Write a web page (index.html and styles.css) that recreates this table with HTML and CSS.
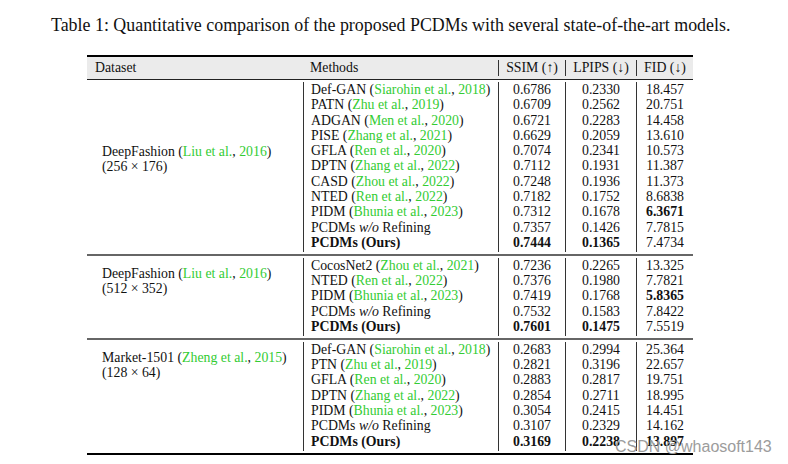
FILE: index.html
```html
<!DOCTYPE html>
<html>
<head>
<meta charset="utf-8">
<link rel="stylesheet" href="styles.css">
</head>
<body>
<div class="page">
  <p class="caption">Table 1: Quantitative comparison of the proposed PCDMs with several state-of-the-art models.</p>
  <div class="tbl">
    <div class="toprule"></div>
    <div class="head">
      <div class="hds">Dataset</div>
      <div class="hm">Methods</div>
      <div class="hc">SSIM (↑)</div>
      <div class="hc">LPIPS (↓)</div>
      <div class="hc">FID (↓)</div>
    </div>
    <div class="headrule"></div>

    <div class="group">
      <div class="ds ds-low"><div>DeepFashion (<span class="cite">Liu et al.</span>, <span class="cite">2016</span>)<br>(256 × 176)</div></div>
      <div class="m">
        <div>Def-GAN (<span class="cite">Siarohin et al.</span>, <span class="cite">2018</span>)</div>
        <div>PATN (<span class="cite">Zhu et al.</span>, <span class="cite">2019</span>)</div>
        <div>ADGAN (<span class="cite">Men et al.</span>, <span class="cite">2020</span>)</div>
        <div>PISE (<span class="cite">Zhang et al.</span>, <span class="cite">2021</span>)</div>
        <div>GFLA (<span class="cite">Ren et al.</span>, <span class="cite">2020</span>)</div>
        <div>DPTN (<span class="cite">Zhang et al.</span>, <span class="cite">2022</span>)</div>
        <div>CASD (<span class="cite">Zhou et al.</span>, <span class="cite">2022</span>)</div>
        <div>NTED (<span class="cite">Ren et al.</span>, <span class="cite">2022</span>)</div>
        <div>PIDM (<span class="cite">Bhunia et al.</span>, <span class="cite">2023</span>)</div>
        <div>PCDMs <i>w/o</i> Refining</div>
        <div><b>PCDMs (Ours)</b></div>
      </div>
      <div class="c">
        <div>0.6786</div><div>0.6709</div><div>0.6721</div><div>0.6629</div><div>0.7074</div><div>0.7112</div><div>0.7248</div><div>0.7182</div><div>0.7312</div><div>0.7357</div><div><b>0.7444</b></div>
      </div>
      <div class="c">
        <div>0.2330</div><div>0.2562</div><div>0.2283</div><div>0.2059</div><div>0.2341</div><div>0.1931</div><div>0.1936</div><div>0.1752</div><div>0.1678</div><div>0.1426</div><div><b>0.1365</b></div>
      </div>
      <div class="c">
        <div>18.457</div><div>20.751</div><div>14.458</div><div>13.610</div><div>10.573</div><div>11.387</div><div>11.373</div><div>8.6838</div><div><b>6.3671</b></div><div>7.7815</div><div>7.4734</div>
      </div>
    </div>
    <div class="midrule"></div>

    <div class="group">
      <div class="ds ds-high"><div>DeepFashion (<span class="cite">Liu et al.</span>, <span class="cite">2016</span>)<br>(512 × 352)</div></div>
      <div class="m">
        <div>CocosNet2 (<span class="cite">Zhou et al.</span>, <span class="cite">2021</span>)</div>
        <div>NTED (<span class="cite">Ren et al.</span>, <span class="cite">2022</span>)</div>
        <div>PIDM (<span class="cite">Bhunia et al.</span>, <span class="cite">2023</span>)</div>
        <div>PCDMs <i>w/o</i> Refining</div>
        <div><b>PCDMs (Ours)</b></div>
      </div>
      <div class="c">
        <div>0.7236</div><div>0.7376</div><div>0.7419</div><div>0.7532</div><div><b>0.7601</b></div>
      </div>
      <div class="c">
        <div>0.2265</div><div>0.1980</div><div>0.1768</div><div>0.1583</div><div><b>0.1475</b></div>
      </div>
      <div class="c">
        <div>13.325</div><div>7.7821</div><div><b>5.8365</b></div><div>7.8422</div><div>7.5519</div>
      </div>
    </div>
    <div class="midrule"></div>

    <div class="group">
      <div class="ds ds-high"><div>Market-1501 (<span class="cite">Zheng et al.</span>, <span class="cite">2015</span>)<br>(128 × 64)</div></div>
      <div class="m">
        <div>Def-GAN (<span class="cite">Siarohin et al.</span>, <span class="cite">2018</span>)</div>
        <div>PTN (<span class="cite">Zhu et al.</span>, <span class="cite">2019</span>)</div>
        <div>GFLA (<span class="cite">Ren et al.</span>, <span class="cite">2020</span>)</div>
        <div>DPTN (<span class="cite">Zhang et al.</span>, <span class="cite">2022</span>)</div>
        <div>PIDM (<span class="cite">Bhunia et al.</span>, <span class="cite">2023</span>)</div>
        <div>PCDMs <i>w/o</i> Refining</div>
        <div><b>PCDMs (Ours)</b></div>
      </div>
      <div class="c">
        <div>0.2683</div><div>0.2821</div><div>0.2883</div><div>0.2854</div><div>0.3054</div><div>0.3107</div><div><b>0.3169</b></div>
      </div>
      <div class="c">
        <div>0.2994</div><div>0.3196</div><div>0.2817</div><div>0.2711</div><div>0.2415</div><div>0.2329</div><div><b>0.2238</b></div>
      </div>
      <div class="c">
        <div>25.364</div><div>22.657</div><div>19.751</div><div>18.995</div><div>14.451</div><div>14.162</div><div><b>13.897</b></div>
      </div>
    </div>
    <div class="botrule"></div>
  </div>
  <div class="watermark">CSDN @whaosoft143</div>
</div>
</body>
</html>
```

FILE: styles.css
```css
html, body {
  margin: 0;
  padding: 0;
  background: #ffffff;
}
body {
  font-family: "Liberation Serif", "Times New Roman", serif;
  color: #111111;
}
.page {
  position: relative;
  width: 788px;
  height: 464px;
  overflow: hidden;
}
.caption {
  margin: 0;
  padding: 13px 0 0 51px;
  font-size: 17.9px;
  line-height: 24px;
  height: 41px;
  box-sizing: border-box;
  white-space: nowrap;
}
.tbl {
  margin: 14px 0 0 87px;
  width: 606px;
  font-size: 13.8px;
  line-height: 15.3px;
}
.toprule {
  height: 2px;
  background: #000;
}
.head {
  display: grid;
  grid-template-columns: 216px 195px 67px 71px 57px;
  background: #ebebeb;
  padding: 3px 0 3px 0;
  height: 22px;
  box-sizing: border-box;
  line-height: 16px;
}
.hds { padding-left: 8px; }
.hm { padding-left: 7px; }
.hc {
  border-left: 1px solid #333;
  text-align: center;
}
.headrule {
  height: 1px;
  background: #222;
}
.group {
  display: grid;
  grid-template-columns: 216px 195px 67px 71px 57px;
  padding: 2px 0 2px 0;
}
.ds {
  padding-left: 15px;
  padding-bottom: 2px;
}
.ds-low { padding-top: 62px; }
.ds-high { padding-top: 8px; }
.m {
  border-left: 1px solid #333;
  padding-left: 7px;
  padding-bottom: 2px;
  white-space: nowrap;
}
.c {
  border-left: 1px solid #333;
  text-align: center;
  padding-bottom: 2px;
}
.cite {
  color: #33cc33;
}
.midrule {
  height: 1.5px;
  background: #666;
}
.botrule {
  height: 2px;
  background: #000;
}
.watermark {
  position: absolute;
  left: 615px;
  top: 437px;
  font-family: "Liberation Sans", Arial, sans-serif;
  font-size: 16px;
  line-height: 20px;
  color: #9c9c9c;
  white-space: nowrap;
}
```
